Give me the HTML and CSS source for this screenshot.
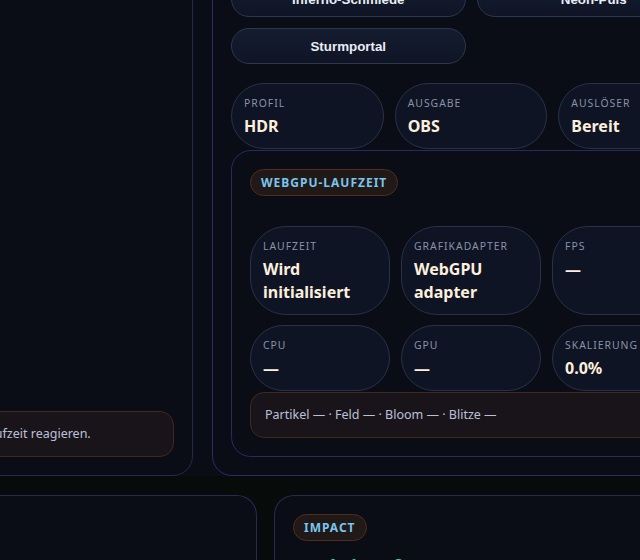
FILE: index.html
```html
<!DOCTYPE html>
<html lang="de">
<head>
<meta charset="utf-8">
<title>Effekt-Konsole</title>
<link rel="stylesheet" href="styles.css">
</head>
<body>
<div class="viewport">
  <section class="row row-top">
    <article class="panel panel-stage">
      <div class="stage-fill"></div>
      <p class="note">Regler und Presets werden sofort auf die Laufzeit reagieren.</p>
    </article>

    <article class="panel panel-control">
      <div class="presets">
        <button class="preset" type="button">Inferno-Schmiede</button>
        <button class="preset" type="button">Neon-Puls</button>
        <button class="preset" type="button">Sturmportal</button>
      </div>

      <div class="stats">
        <div class="stat"><span class="stat-label">Profil</span><span class="stat-value">HDR</span></div>
        <div class="stat"><span class="stat-label">Ausgabe</span><span class="stat-value">OBS</span></div>
        <div class="stat"><span class="stat-label">Auslöser</span><span class="stat-value">Bereit</span></div>
      </div>

      <div class="runtime">
        <span class="badge">WebGPU-Laufzeit</span>
        <div class="metrics">
          <div class="stat"><span class="stat-label">Laufzeit</span><span class="stat-value">Wird initialisiert</span></div>
          <div class="stat"><span class="stat-label">Grafikadapter</span><span class="stat-value">WebGPU adapter</span></div>
          <div class="stat"><span class="stat-label">FPS</span><span class="stat-value">—</span></div>
          <div class="stat"><span class="stat-label">CPU</span><span class="stat-value">—</span></div>
          <div class="stat"><span class="stat-label">GPU</span><span class="stat-value">—</span></div>
          <div class="stat"><span class="stat-label">Skalierung</span><span class="stat-value">0.0%</span></div>
        </div>
        <p class="note runtime-note">Partikel — · Feld — · Bloom — · Blitze —</p>
      </div>
    </article>
  </section>

  <section class="row row-bottom">
    <article class="panel panel-blank"></article>
    <article class="panel panel-impact">
      <span class="badge">Impact</span>
      <h2 class="impact-title">Reaktionsfenster</h2>
    </article>
  </section>
</div>
</body>
</html>
```

FILE: styles.css
```css
html, body {
  margin: 0;
  padding: 0;
}

body {
  width: 640px;
  height: 560px;
  overflow: hidden;
  background: #0a0d16;
  color: #e8ecf5;
  font-family: "Noto Sans", "Open Sans", sans-serif;
}

.viewport {
  display: flex;
  flex-direction: column;
}

/* ---------- rows ---------- */

.row {
  display: grid;
}

.row-top {
  grid-template-columns: 489px 518px;
  column-gap: 19px;
  margin-top: -38px;
  margin-left: -296px;
}

.row-bottom {
  grid-template-columns: 300px 420px;
  column-gap: 17px;
  margin-left: -43px;
  padding-top: 19px;
  background: #070b09;
}

/* ---------- panels ---------- */

.panel {
  box-sizing: border-box;
  border: 1px solid #2c2856;
  border-radius: 20px;
  padding: 18px;
  background: #0a0d16;
  display: flex;
  flex-direction: column;
}

.panel-stage {
  border-color: #272a4e;
}

.panel-control {
  border-color: #33296a;
}

.row-bottom .panel {
  border-bottom: none;
  border-bottom-left-radius: 0;
  border-bottom-right-radius: 0;
  min-height: 120px;
}

.stage-fill {
  flex: 1;
}

/* ---------- notes / strips ---------- */

.note {
  margin: 0;
  box-sizing: border-box;
  padding: 13px 14px;
  border: 1px solid #3f2a1c;
  border-radius: 14px;
  background: #191419;
  color: #b9c1d9;
  font-size: 12.5px;
  line-height: 18px;
  white-space: nowrap;
}

/* ---------- preset buttons ---------- */

.presets {
  display: grid;
  grid-template-columns: 1fr 1fr;
  gap: 11px;
}

.preset {
  height: 36px;
  border: 1px solid #2c3750;
  border-radius: 18px;
  background: linear-gradient(180deg, #141c2f 0%, #0f1525 100%);
  color: #e9edf6;
  font-family: "Liberation Sans", Arial, sans-serif;
  font-weight: bold;
  font-size: 13.33px;
  padding: 0 12px;
}

/* ---------- stat pills ---------- */

.stats {
  display: grid;
  grid-template-columns: repeat(3, 1fr);
  gap: 11px;
  margin-top: 19px;
}

.stat {
  box-sizing: border-box;
  display: flex;
  flex-direction: column;
  gap: 4px;
  padding: 12px 12px 10px;
  border: 1px solid #283246;
  border-radius: 36px;
  background: #0e1424;
}

.stat-label {
  font-size: 10.4px;
  line-height: 15px;
  letter-spacing: 1px;
  text-transform: uppercase;
  color: #8a93a7;
}

.stat-value {
  font-size: 16px;
  line-height: 23px;
  font-weight: bold;
  color: #fcefdc;
}

/* ---------- runtime card ---------- */

.runtime {
  margin-top: 1px;
  box-sizing: border-box;
  border: 1px solid #2f2763;
  border-radius: 20px;
  padding: 18px;
  display: flex;
  flex-direction: column;
  align-items: flex-start;
}

.badge {
  display: inline-block;
  padding: 5px 10px;
  border: 1px solid #4d2f1c;
  border-radius: 14px;
  background: #211917;
  color: #79c6ef;
  font-size: 12px;
  line-height: 15px;
  font-weight: bold;
  letter-spacing: 1px;
  text-transform: uppercase;
}

.metrics {
  align-self: stretch;
  display: grid;
  grid-template-columns: repeat(3, 1fr);
  gap: 10px 11px;
  margin-top: 30px;
}

.runtime-note {
  align-self: stretch;
  margin-top: 1px;
}

/* ---------- impact panel ---------- */

.panel-impact {
  align-items: flex-start;
}

.impact-title {
  margin: 14px 0 0;
  font-size: 20px;
  line-height: 24px;
  font-weight: bold;
  color: #3fd488;
}
```
